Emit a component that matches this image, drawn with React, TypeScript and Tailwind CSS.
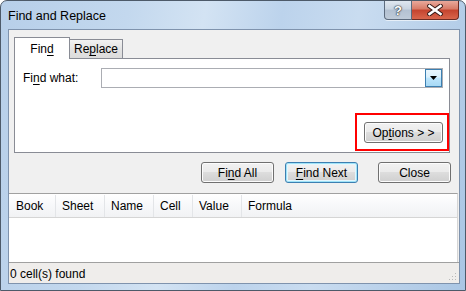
import React from "react";

function U({ children }: { children: React.ReactNode }) {
  return <span className="underline underline-offset-[2px] decoration-[1px]">{children}</span>;
}

function Btn({ children, w, focus }: { children: React.ReactNode; w: string; focus?: boolean }) {
  return (
    <div
      className={
        "h-[21px] rounded-[3px] border flex items-center justify-center bg-[linear-gradient(#f2f2f2_0%,#ebebeb_45%,#dddddd_50%,#cfcfcf_100%)] " +
        w +
        (focus
          ? " border-[#3c7fb1] shadow-[inset_0_0_0_1px_#9fe3f8,inset_0_0_0_2px_#e4f6fd]"
          : " border-[#707070] shadow-[inset_0_0_0_1px_#fcfcfc]")
      }
    >
      <span className="leading-none">{children}</span>
    </div>
  );
}

export default function App() {
  return (
    <div className="w-[466px] h-[291px] overflow-hidden bg-white relative font-['Liberation_Sans',Arial,sans-serif] text-[12px] text-black">
      <div className="w-[466px] h-[291px] rounded-t-[7px] border border-[#4d5a69] bg-[linear-gradient(100deg,#b7cfe9_0%,#c3d8ee_25%,#d3e3f3_40%,#bcd3ec_55%,#c9dcf0_70%,#aac6e4_100%)] flex flex-col">
        {/* title bar */}
        <div className="h-[28px] flex items-start justify-between relative">
          <div className="pl-[7px] pt-[8px] text-[12.5px] leading-[14px] text-black">Find and Replace</div>
          <div className="flex mr-[6px] shadow-[0_1px_0_rgba(255,255,255,0.6)] rounded-b-[4px]">
            <div className="w-[28px] h-[19px] rounded-bl-[4px] border border-t-0 border-[#5c6b7e] bg-[linear-gradient(#dfe7f0_0%,#c9d4e1_45%,#b3c1d2_50%,#bfcbd9_100%)] flex items-center justify-center">
              <span className="text-white font-bold text-[13px] leading-none [text-shadow:0_0_1px_#303840,0_0_1px_#303840,0_0_2px_#303840]">?</span>
            </div>
            <div className="w-[47px] h-[19px] rounded-br-[4px] border border-l-0 border-t-0 border-[#6b2b23] bg-[linear-gradient(#e9a99b_0%,#d77a66_45%,#c4432e_50%,#d9664c_100%)] flex items-center justify-center">
              <svg width="16" height="12" viewBox="0 0 16 12">
                <path d="M2.5 2 L13.5 10 M13.5 2 L2.5 10" stroke="#3a1c18" strokeWidth="4.6" strokeLinecap="square" />
                <path d="M2.5 2 L13.5 10 M13.5 2 L2.5 10" stroke="#ffffff" strokeWidth="2.6" strokeLinecap="square" />
              </svg>
            </div>
          </div>
        </div>

        {/* client area */}
        <div className="ml-[7px] w-[452px] h-[255px] border border-[#7f93ad] bg-[#f0f0f0] flex flex-col">
          {/* tabs */}
          <div className="pt-[7px] pl-[5px] pr-[9px]">
            <div className="flex items-end h-[21px]">
              <div className="w-[56px] h-[22px] -mb-[1px] relative z-10 bg-white border border-b-0 border-[#898c95] flex items-center justify-center pt-[1px]">
                Fin<U>d</U>
              </div>
              <div className="w-[54px] h-[19px] -ml-[1px] border border-b-0 border-[#898c95] bg-[linear-gradient(#f2f2f2,#e3e3e3_50%,#dcdcdc)] flex items-center justify-center">
                Re<U>p</U>lace
              </div>
            </div>
            <div className="h-[95px] border border-[#898c95] bg-white flex flex-col">
              <div className="flex items-center pt-[9px] pl-[8px] pr-[6px]">
                <div className="w-[78px]">
                  Fi<U>n</U>d what:
                </div>
                <div className="flex-1 h-[20px] border border-[#abadb3] bg-white flex justify-end items-stretch">
                  <div className="w-[17px] border border-[#3c7fb1] bg-[linear-gradient(#eaf6fd,#d9f0fc_45%,#bee6fd_50%,#a7d9f5)] flex items-center justify-center">
                    <svg width="7" height="4" viewBox="0 0 7 4">
                      <path d="M0 0 L7 0 L3.5 4 Z" fill="#000" />
                    </svg>
                  </div>
                </div>
              </div>
              <div className="flex justify-end pr-[6px] mt-[34px]">
                <Btn w="w-[79px]">
                  Op<U>t</U>ions &gt; &gt;
                </Btn>
              </div>
            </div>
          </div>

          {/* buttons row */}
          <div className="flex justify-end pr-[8px] mt-[9px]">
            <Btn w="w-[73px]">
              Fi<U>n</U>d All
            </Btn>
            <div className="w-[11px]" />
            <Btn w="w-[73px]" focus>
              <U>F</U>ind Next
            </Btn>
            <div className="w-[20px]" />
            <Btn w="w-[73px]">Close</Btn>
          </div>

          {/* results table */}
          <div className="mt-[10px] flex-1 flex flex-col bg-white border-t border-[#a0a0a0] mr-[1px] border-r border-r-[#d6d6d6]">
            <div className="h-[24px] flex border-b border-[#d5d5d5] bg-[linear-gradient(#ffffff,#f7f8fa_50%,#f1f2f4)] pt-[1px]">
              <div className="w-[47px] pl-[7px] flex items-center border-r border-[#e3e5e8]">Book</div>
              <div className="w-[49px] pl-[6px] flex items-center border-r border-[#e3e5e8]">Sheet</div>
              <div className="w-[49px] pl-[6px] flex items-center border-r border-[#e3e5e8]">Name</div>
              <div className="w-[39px] pl-[6px] flex items-center border-r border-[#e3e5e8]">Cell</div>
              <div className="w-[49px] pl-[6px] flex items-center border-r border-[#e3e5e8]">Value</div>
              <div className="flex-1 pl-[6px] flex items-center">Formula</div>
            </div>
            <div className="flex-1 bg-white" />
          </div>

          {/* status bar */}
          <div className="h-[21px] border-t border-[#a0a0a0] bg-[#efedeb] flex items-center pl-[1px] pt-[1px] relative">
            <span>0 cell(s) found</span>
            <svg className="absolute right-[2px] bottom-[2px]" width="10" height="10" viewBox="0 0 10 10">
              <g fill="#b8b8b8">
                <rect x="8" y="2" width="1" height="1" />
                <rect x="5" y="5" width="1" height="1" />
                <rect x="8" y="5" width="1" height="1" />
                <rect x="2" y="8" width="1" height="1" />
                <rect x="5" y="8" width="1" height="1" />
                <rect x="8" y="8" width="1" height="1" />
              </g>
            </svg>
          </div>
        </div>
      </div>

      {/* red annotation highlight */}
      <div className="absolute left-[355px] top-[113px] w-[94px] h-[38px] border-2 border-[#ff0000]" />
    </div>
  );
}
